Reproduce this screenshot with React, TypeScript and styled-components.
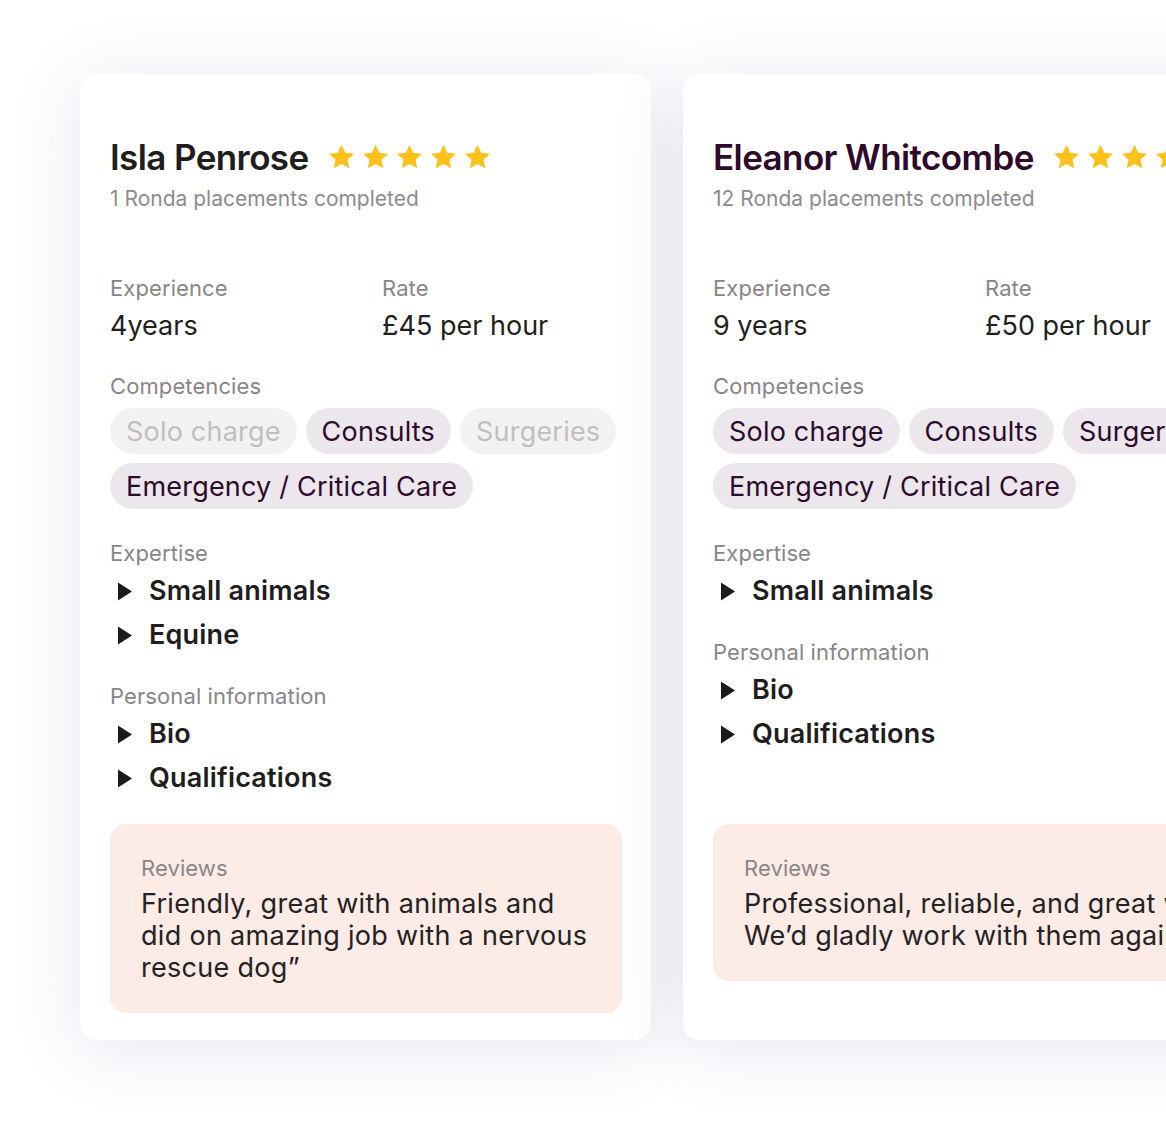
import styled, { createGlobalStyle } from "styled-components";

const GlobalStyle = createGlobalStyle`
  html, body {
    margin: 0;
    padding: 0;
    background: #ffffff;
    overflow: hidden;
  }
  body {
    font-family: Inter, "Noto Sans", sans-serif;
    -webkit-font-smoothing: antialiased;
  }
`;

type Chip = { label: string; off?: boolean };

type Profile = {
  name: string;
  nameColor: string;
  placements: string;
  experience: string;
  rate: string;
  chips: Chip[];
  expertise: string[];
  personal: string[];
  review: string[];
};

const profiles: Profile[] = [
  {
    name: "Isla Penrose",
    nameColor: "#1f1d1e",
    placements: "1 Ronda placements completed",
    experience: "4years",
    rate: "£45 per hour",
    chips: [
      { label: "Solo charge", off: true },
      { label: "Consults" },
      { label: "Surgeries", off: true },
      { label: "Emergency / Critical Care" },
    ],
    expertise: ["Small animals", "Equine"],
    personal: ["Bio", "Qualifications"],
    review: [
      "Friendly, great with animals and",
      "did on amazing job with a nervous",
      "rescue dog”",
    ],
  },
  {
    name: "Eleanor Whitcombe",
    nameColor: "#2e0a2b",
    placements: "12 Ronda placements completed",
    experience: "9 years",
    rate: "£50 per hour",
    chips: [
      { label: "Solo charge" },
      { label: "Consults" },
      { label: "Surgeries" },
      { label: "Emergency / Critical Care" },
    ],
    expertise: ["Small animals"],
    personal: ["Bio", "Qualifications"],
    review: [
      "Professional, reliable, and great with pets.",
      "We’d gladly work with them again",
    ],
  },
];

const Star = () => (
  <svg width="27" height="26" viewBox="0 0 24 23">
    <path
      d="M12 0.6l3.3 7.1 7.8 0.9-5.8 5.3 1.6 7.7L12 17.7l-6.9 3.9 1.6-7.7L0.9 8.6l7.8-0.9z"
      fill="#fdc11c"
    />
  </svg>
);

const Caret = () => (
  <svg width="14" height="19" viewBox="0 0 14 19">
    <path d="M0 0.5L14 9.5 0 18.5z" fill="#1c1a1b" />
  </svg>
);

const CandidateCard = ({ p }: { p: Profile }) => (
  <Card>
    <Details>
      <NameRow>
        <Name $color={p.nameColor}>{p.name}</Name>
        <Stars>
          {[0, 1, 2, 3, 4].map((i) => (
            <Star key={i} />
          ))}
        </Stars>
      </NameRow>
      <Placements>{p.placements}</Placements>

      <Stats>
        <div>
          <Label>Experience</Label>
          <Value>{p.experience}</Value>
        </div>
        <div>
          <Label>Rate</Label>
          <Value>{p.rate}</Value>
        </div>
      </Stats>

      <Section>
        <Label>Competencies</Label>
        <Chips>
          {p.chips.map((c) => (
            <Pill key={c.label} $off={c.off}>
              {c.label}
            </Pill>
          ))}
        </Chips>
      </Section>

      <Section>
        <Label>Expertise</Label>
        <List>
          {p.expertise.map((e) => (
            <Item key={e}>
              <Caret />
              {e}
            </Item>
          ))}
        </List>
      </Section>

      <Section>
        <Label>Personal information</Label>
        <List>
          {p.personal.map((e) => (
            <Item key={e}>
              <Caret />
              {e}
            </Item>
          ))}
        </List>
      </Section>
    </Details>

    <Reviews>
      <Label>Reviews</Label>
      <Quote>
        {p.review.map((line) => (
          <QuoteLine key={line}>{line}</QuoteLine>
        ))}
      </Quote>
    </Reviews>
  </Card>
);

const App = () => {
  return (
    <Page>
      <GlobalStyle />
      {profiles.map((p) => (
        <CandidateCard key={p.name} p={p} />
      ))}
    </Page>
  );
};

export default App;

const Page = styled.div`
  width: 1166px;
  height: 1128px;
  box-sizing: border-box;
  padding: 74px 0 0 80px;
  display: flex;
  align-items: flex-start;
  gap: 32px;
  overflow: hidden;
`;

const Card = styled.div`
  flex: 0 0 571px;
  width: 571px;
  height: 966px;
  box-sizing: border-box;
  padding: 0 29px 0 30px;
  background: #ffffff;
  border-radius: 16px;
  box-shadow: 0 8px 70px rgba(70, 50, 120, 0.13);
  display: flex;
  flex-direction: column;
`;

const Details = styled.div`
  min-height: 750px;
  box-sizing: border-box;
  padding-top: 62px;
`;

const NameRow = styled.div`
  display: flex;
  align-items: center;
  gap: 19px;
  height: 42px;
`;

const Name = styled.div<{ $color: string }>`
  font-size: 35px;
  font-weight: 600;
  letter-spacing: -0.6px;
  color: ${(p) => p.$color};
  white-space: nowrap;
`;

const Stars = styled.div`
  display: flex;
  gap: 7px;
  flex-shrink: 0;
`;

const Placements = styled.div`
  margin-top: 8px;
  font-size: 21px;
  line-height: 26px;
  color: #8f8a8d;
  white-space: nowrap;
`;

const Stats = styled.div`
  display: grid;
  grid-template-columns: 272px 1fr;
  margin-top: 62px;
`;

const Label = styled.div`
  font-size: 22px;
  line-height: 28px;
  letter-spacing: 0.1px;
  color: #8a8588;
  white-space: nowrap;
`;

const Value = styled.div`
  margin-top: 8px;
  font-size: 27px;
  line-height: 32px;
  color: #221f20;
  white-space: nowrap;
`;

const Section = styled.div`
  margin-top: 30px;
`;

const Chips = styled.div`
  display: flex;
  flex-wrap: wrap;
  gap: 9px;
  margin-top: 8px;
  width: 100%;
`;

const Pill = styled.div<{ $off?: boolean }>`
  height: 46px;
  padding: 0 16px;
  border-radius: 23px;
  display: flex;
  align-items: center;
  font-size: 27px;
  letter-spacing: 0.2px;
  white-space: nowrap;
  background: ${(p) => (p.$off ? "#f3f2f3" : "#ece6ed")};
  color: ${(p) => (p.$off ? "#c3bdc1" : "#2e0a2b")};
`;

const List = styled.div`
  display: flex;
  flex-direction: column;
  gap: 10px;
  margin-top: 7px;
`;

const Item = styled.div`
  display: flex;
  align-items: center;
  gap: 17px;
  padding-left: 8px;
  font-size: 27px;
  line-height: 34px;
  font-weight: 600;
  letter-spacing: 0.2px;
  color: #1f1d1e;
  white-space: nowrap;
`;

const Reviews = styled.div`
  width: 512px;
  box-sizing: border-box;
  padding: 30px 31px 29px;
  background: #fdebe5;
  border-radius: 16px;
`;

const Quote = styled.div`
  margin-top: 6px;
  font-size: 27px;
  line-height: 32px;
  letter-spacing: 0.3px;
  color: #252223;
`;

const QuoteLine = styled.div`
  white-space: nowrap;
`;
